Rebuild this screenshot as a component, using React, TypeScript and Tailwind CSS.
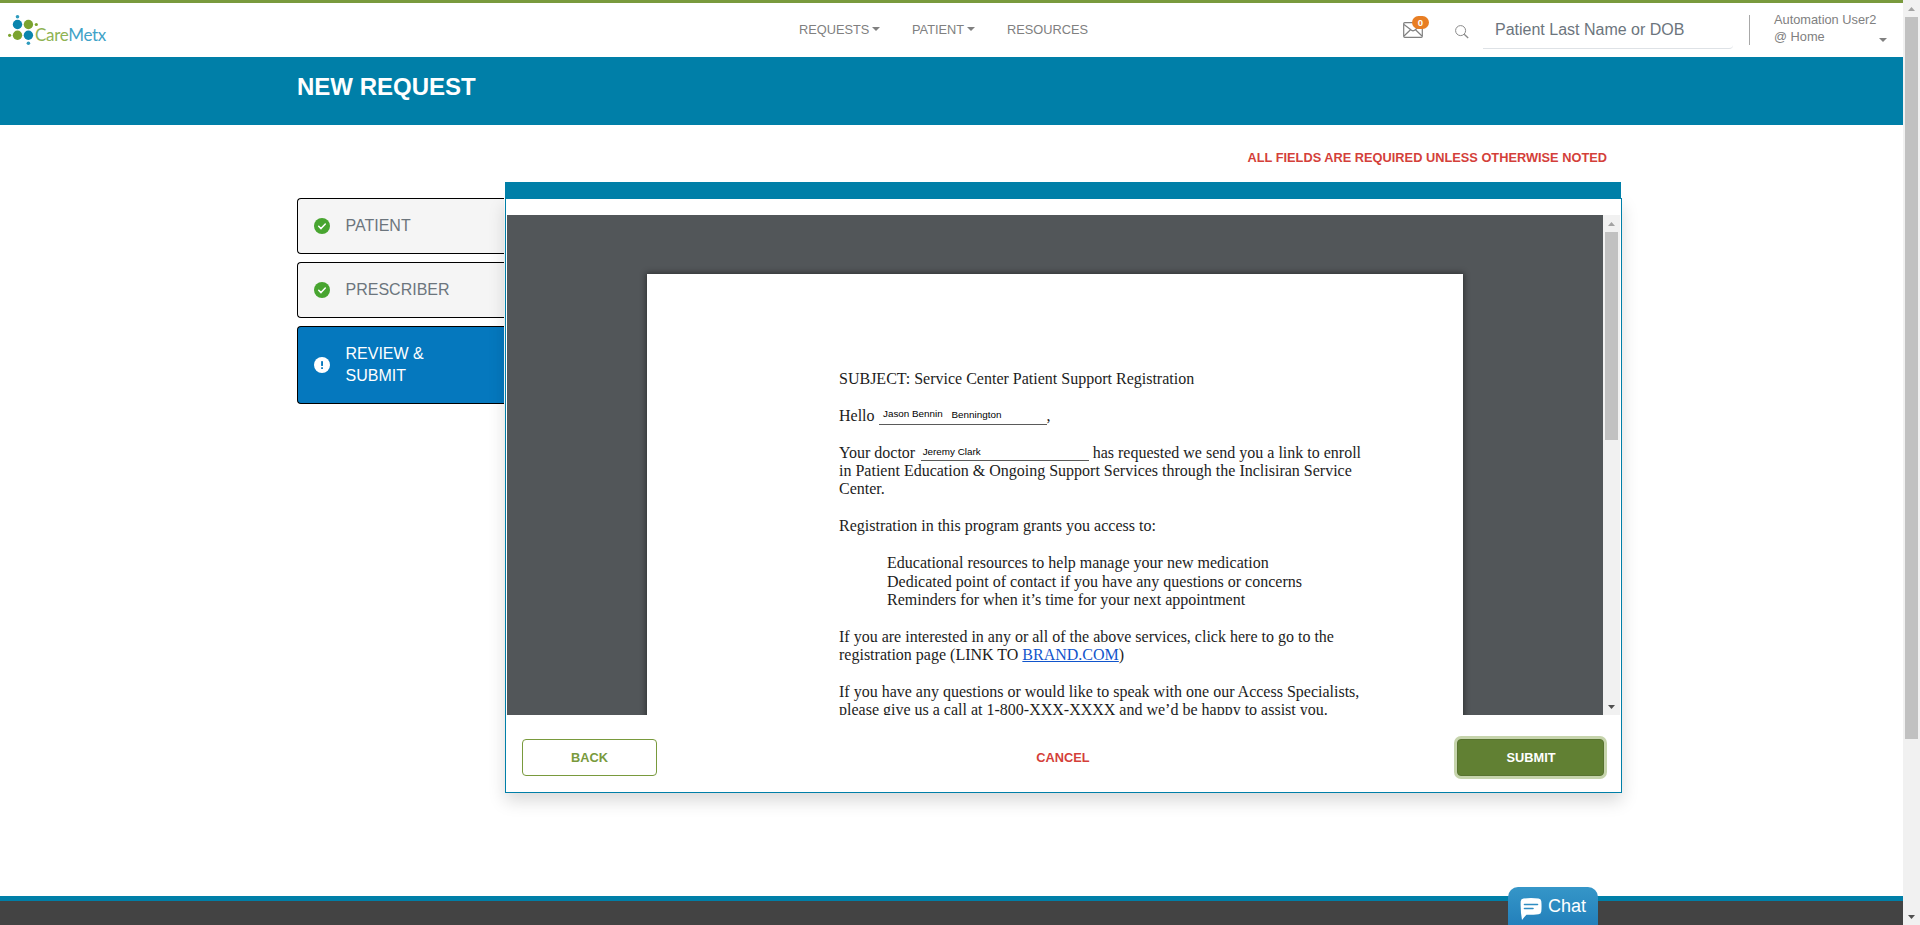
import React from "react";

const Caret = () => (
  <svg width="8" height="4" viewBox="0 0 8 4" className="shrink-0">
    <path d="M0 0h8L4 4z" fill="#808080" />
  </svg>
);

const CheckIcon = () => (
  <svg width="16" height="16" viewBox="0 0 16 16" className="shrink-0">
    <circle cx="8" cy="8" r="8" fill="#48a530" />
    <path d="M4.7 8.3l2.3 2.3 4.3-4.6" fill="none" stroke="#fff" strokeWidth="1.5" strokeLinecap="round" strokeLinejoin="round" />
  </svg>
);

const AlertIcon = () => (
  <svg width="16" height="16" viewBox="0 0 16 16" className="shrink-0">
    <circle cx="8" cy="8" r="8" fill="#fff" />
    <rect x="7.1" y="4" width="1.9" height="5" rx="0.4" fill="#0578be" />
    <rect x="7.1" y="10.2" width="1.9" height="1.8" rx="0.4" fill="#0578be" />
  </svg>
);

const Logo = () => (
  <div className="flex h-full w-[800px] pl-2">
    <svg width="30" height="32" viewBox="0 0 30 32" className="mt-[11px] shrink-0">
      <circle cx="9.5" cy="2.7" r="1.8" fill="#2f9bbd" />
      <circle cx="9.5" cy="10.5" r="4.7" fill="#0a85ad" />
      <circle cx="20.4" cy="10.5" r="4.7" fill="#7ba32f" />
      <circle cx="28.3" cy="10.5" r="1.6" fill="#7ba32f" />
      <circle cx="1.6" cy="21.3" r="1.6" fill="#7ba32f" />
      <circle cx="9.5" cy="21.3" r="4.7" fill="#7ba32f" />
      <circle cx="20.4" cy="21.3" r="4.7" fill="#0a85ad" />
      <circle cx="20.4" cy="29.3" r="1.8" fill="#2f9bbd" />
    </svg>
    <span className="mt-[20px] -ml-[3px] font-['Lato',sans-serif] text-[17px] leading-[24px] font-normal tracking-[-0.3px] text-[#8fb353]">
      Care<span className="text-[#3fa3c8]">Metx</span>
    </span>
  </div>
);

const Header = () => (
  <header className="flex h-[57px] shrink-0 border-t-[3px] border-[#799a3d] bg-white text-[12.8px] text-[#808080]">
    <Logo />
    <nav className="flex h-[54px] w-[604px] shrink-0 items-center pb-[5px] -ml-px">
      <span className="flex w-[113px] items-center gap-[3px] pt-1">REQUESTS<span className="pb-[2px]"><Caret /></span></span>
      <span className="flex w-[95px] items-center gap-[3px] pt-1">PATIENT<span className="pb-[2px]"><Caret /></span></span>
      <span className="pt-1">RESOURCES</span>
    </nav>
    <div className="flex shrink-0">
      <div className="relative mt-[19px] h-4 w-[52px]">
        <svg width="20" height="16" viewBox="0 0 20 16" fill="none" stroke="#808080" strokeWidth="1.2">
          <rect x="0.7" y="0.7" width="18.6" height="14.6" rx="1" />
          <path d="M1 2.5l7.5 5.8q1.5 1 3 0L19 2.5M1 14l6.5-6.3M19 14l-6.5-6.3" />
        </svg>
        <span className="absolute -top-[6px] left-[9px] flex h-[13px] w-[17px] items-center justify-center rounded-full bg-[#e87e23] text-[9.6px] leading-none font-bold text-white">0</span>
      </div>
      <svg width="14" height="14" viewBox="0 0 14 14" fill="none" stroke="#8a8a8a" className="mt-[22px]">
        <circle cx="5.6" cy="5.6" r="5" />
        <path d="M9.2 9.2l4 3.8" strokeWidth="1.3" />
      </svg>
      <div className="mt-[5px] ml-[14px] h-[41px] w-[250px] rounded-br border-b border-[#dee2e6] pt-[10px] pl-3 text-base leading-[24px] text-[#6c757d]">
        Patient Last Name or DOB
      </div>
      <div className="mt-3 ml-4 h-[30px] w-px bg-[#a8a8a8]" />
      <div className="mt-[8px] ml-6 w-[105px] leading-[17px] whitespace-nowrap">
        Automation User2<br />@ Home
      </div>
      <div className="pt-[35px]"><Caret /></div>
    </div>
  </header>
);

const STEPS = [
  { label: "PATIENT", active: false },
  { label: "PRESCRIBER", active: false },
  { label: "REVIEW & SUBMIT", active: true },
];

const Steps = () => (
  <aside className="mt-4 flex w-[207px] shrink-0 flex-col gap-2">
    {STEPS.map((s) => (
      <div
        key={s.label}
        className={
          "flex items-center gap-4 rounded-l border border-r-0 border-black pl-4 text-base leading-[22px] " +
          (s.active ? "h-[78px] bg-[#0578be] text-white" : "h-14 bg-[#f5f5f5] text-[#6c757d]")
        }
      >
        {s.active ? <AlertIcon /> : <CheckIcon />}
        <span className="-ml-[0.5px] w-[110px]">{s.label}</span>
      </div>
    ))}
  </aside>
);

const Field = ({ children, lift }: { children: React.ReactNode; lift: string }) => (
  <span
    className={
      "inline-flex h-4 w-[168px] items-start border-b border-[#5a5a5a] font-['Liberation_Sans',sans-serif] text-[9.85px] leading-[10px] text-black " +
      lift
    }
  >
    {children}
  </span>
);

const Letter = () => (
  <div className="mt-[59px] ml-[140px] h-[1056px] w-[816px] bg-white pt-[96px] pl-48 font-['Liberation_Serif',serif] text-base leading-[18.42px] whitespace-nowrap text-[#1c1c1c] shadow-[0_0_6px_1px_rgba(0,0,0,0.45)]">
    <p>SUBJECT: Service Center Patient Support Registration</p>
    <p className="mt-[18.42px] h-[18.42px]">
      Hello{" "}
      <Field lift="align-[4px]">
        <span className="w-[68px] shrink-0 pl-[4.5px]">Jason Bennin</span>
        <span className="pt-px pl-[5px]">Bennington</span>
      </Field>
      ,
    </p>
    <div className="mt-[18.42px]">
      <p className="h-[18.42px]">
        Your doctor{" "}
        <span className="pl-[1.5px]">
          <Field lift="align-[3px]">
            <span className="pt-[2px] pl-[2px]">Jeremy Clark</span>
          </Field>
        </span>{" "}
        has requested we send you a link to enroll
      </p>
      <p>
        in Patient Education &amp; Ongoing Support Services through the Inclisiran Service<br />
        Center.
      </p>
    </div>
    <p className="mt-[18.42px]">Registration in this program grants you access to:</p>
    <p className="mt-[18.42px] pl-12">
      Educational resources to help manage your new medication<br />
      Dedicated point of contact if you have any questions or concerns<br />
      Reminders for when it’s time for your next appointment
    </p>
    <p className="mt-[18.42px]">
      If you are interested in any or all of the above services, click here to go to the<br />
      registration page (LINK TO <a className="text-[#1155cc] underline">BRAND.COM</a>)
    </p>
    <p className="mt-[18.42px]">
      If you have any questions or would like to speak with one our Access Specialists,<br />
      please give us a call at 1-800-XXX-XXXX and we’d be happy to assist you.
    </p>
  </div>
);

const Arrow = ({ up, color }: { up?: boolean; color: string }) => (
  <svg width="17" height="17" viewBox="0 0 17 17" className="shrink-0">
    <path d={up ? "M5 11h7L8.5 7z" : "M5 7h7L8.5 11z"} fill={color} />
  </svg>
);

const Card = () => (
  <section className="relative w-[1117px] shrink-0">
    <div className="relative z-10 h-[17px] w-[1116px] bg-[#007fa8]" />
    <div className="-mt-px flex h-[595px] flex-col border border-[#007fa8] bg-white px-px pt-4 shadow-[0_8px_16px_rgba(0,0,0,0.15)]">
      <div className="flex h-[500px] shrink-0">
        <div className="w-[1096px] overflow-hidden bg-[#525659]">
          <div className="flex">
            <Letter />
          </div>
        </div>
        <div className="flex w-[17px] flex-col justify-between bg-[#f1f1f1]">
          <div>
            <Arrow up color="#a3a3a3" />
            <div className="mx-auto h-[208px] w-[13px] bg-[#c1c1c1]" />
          </div>
          <Arrow color="#505050" />
        </div>
      </div>
      <div className="mt-6 flex items-center justify-between pr-4 pl-[15px] text-[12.8px] font-bold">
        <div className="flex h-[37px] w-[135px] items-center justify-center rounded border border-[#799a3d] text-[#799a3d]">BACK</div>
        <div className="ml-[12px] text-[#d43f3a]">CANCEL</div>
        <div className="flex h-[37px] w-[147px] items-center justify-center rounded border border-[#587330] bg-[#618033] pl-px text-white shadow-[0_0_0_3px_#c6d4ac]">SUBMIT</div>
      </div>
    </div>
  </section>
);

const PageScrollbar = () => (
  <div className="flex h-full w-[17px] shrink-0 flex-col justify-between bg-[#f1f1f1]">
    <div className="flex flex-col items-center">
      <Arrow up color="#a3a3a3" />
      <div className="h-[722px] w-[13px] bg-[#c1c1c1]" />
    </div>
    <Arrow color="#505050" />
  </div>
);

export default function App() {
  return (
    <div className="flex h-[925px] w-[1920px] overflow-hidden bg-white font-['Liberation_Sans',Arial,sans-serif]">
      <div className="relative flex w-[1903px] flex-col">
        <Header />
        <div className="h-[68px] shrink-0 bg-[#007fa8] pt-[14px] pl-[297px] text-2xl leading-[32px] font-bold text-white">NEW REQUEST</div>
        <main className="h-[771px] shrink-0 pl-[297px]">
          <div className="h-[57px] w-[1310px] pt-[23px] text-right text-[12.8px] leading-[19px] font-bold text-[#d43f3a]">
            ALL FIELDS ARE REQUIRED UNLESS OTHERWISE NOTED
          </div>
          <div className="flex items-start gap-px">
            <Steps />
            <Card />
          </div>
        </main>
        <footer className="h-[29px] shrink-0 border-t-[5px] border-[#007fa8] bg-[#434343]" />
        <div className="absolute bottom-0 left-[1508px] flex h-[38px] w-[90px] rounded-t-[10px] bg-linear-to-b from-[#3596c8] to-[#2380bb] pt-[8px] pl-[12px] text-lg leading-[22px] text-white">
          <svg width="22" height="23" viewBox="0 0 22 23" className="mt-[3px] mr-[6px] shrink-0">
            <path d="M3.500 0.500Q11 -0.300 18.500 0.500Q21 0.800 21.300 3.300Q21.800 8.500 21.300 13.500Q21 16 18.500 16.300Q12 17 6.500 16.800Q4.500 18.500 2 22Q0.300 13 0.700 3.300Q1 0.800 3.500 0.500z" fill="#fff" />
            <path d="M4.500 6.500h13M4.500 10.500h8.500" stroke="#2f8dc2" strokeWidth="1.600" strokeLinecap="round" />
          </svg>
          Chat
        </div>
      </div>
      <PageScrollbar />
    </div>
  );
}
